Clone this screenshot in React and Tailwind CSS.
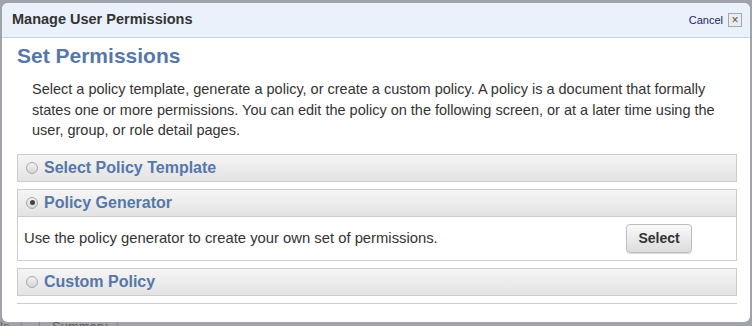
const sections = [
  { id: "template", title: "Select Policy Template", selected: false },
  {
    id: "generator",
    title: "Policy Generator",
    selected: true,
    body: "Use the policy generator to create your own set of permissions.",
  },
  { id: "custom", title: "Custom Policy", selected: false },
];

const Radio = ({ checked }) => (
  <span className="w-[12px] h-[12px] rounded-full border border-[#a9a9a9] bg-gradient-to-b from-[#f2f2f2] to-[#d6d6d6] flex items-center justify-center shrink-0">
    {checked && <span className="w-[5px] h-[5px] rounded-full bg-[#444]" />}
  </span>
);

const Section = ({ section }) => (
  <div className="border border-[#cccccc]">
    <div className="h-[26px] flex items-center gap-[6px] pl-[8px] bg-gradient-to-b from-[#f5f5f5] to-[#e3e3e3]">
      <Radio checked={section.selected} />
      <span className="text-[16px] font-bold text-[#5677a8]">{section.title}</span>
    </div>
    {section.body && (
      <div className="border-t border-[#cccccc] bg-white h-[44px] flex items-center justify-between pl-[6px] pr-[44px]">
        <span className="text-[14.8px] text-[#333]">{section.body}</span>
        <button className="w-[66px] h-[29px] rounded-[4px] border border-[#bdbdbd] bg-gradient-to-b from-[#fafafa] to-[#dcdcdc] text-[14px] font-bold text-[#333] shadow-[0_1px_1px_rgba(0,0,0,0.15)]">
          Select
        </button>
      </div>
    )}
  </div>
);

export default function App() {
  return (
    <div
      className="relative w-[752px] h-[326px] overflow-hidden bg-[#a0a4a8]"
      style={{ fontFamily: '"Liberation Sans", Arial, sans-serif' }}
    >
      {/* page behind the overlay */}
      <div className="absolute left-0 top-[320px] w-full h-[6px] flex text-[13px] text-[#5c5f62] leading-[14px]">
        <div className="w-[22px] border-r border-[#84888c] pl-0">ls</div>
        <div className="w-[18px] border-r border-[#84888c]" />
        <div className="w-[78px] border-r border-[#84888c] pl-[12px]">Summary</div>
      </div>

      <div className="absolute left-[2px] top-[3px] w-[748px] h-[319px] rounded-[6px] bg-white overflow-hidden flex flex-col">
        <div className="h-[35px] shrink-0 bg-[#eaf1fb] border-b border-[#c6d4e6] flex items-center justify-between pl-[10px] pr-[8px]">
          <span className="text-[14.5px] font-bold text-[#333]">Manage User Permissions</span>
          <div className="flex items-center gap-[5px]">
            <span className="text-[11px] text-[#1d1d6b]">Cancel</span>
            <span className="w-[14px] h-[14px] border border-[#a8a8a8] bg-[#ececec] flex items-center justify-center text-[12px] leading-none text-[#555]">
              ×
            </span>
          </div>
        </div>

        <div className="pl-[15px] pr-[13px]">
          <h1 className="mt-[6px] text-[21px] font-bold text-[#5677a8] leading-[23px]">Set Permissions</h1>
          <p className="mt-[12px] pl-[15px] pr-[8px] text-[14.5px] text-[#333] leading-[20.5px]">
            Select a policy template, generate a policy, or create a custom policy. A policy is a document that formally
            <br />
            states one or more permissions. You can edit the policy on the following screen, or at a later time using the
            <br />
            user, group, or role detail pages.
          </p>
          <div className="mt-[13px] flex flex-col gap-[7px]">
            {sections.map((s) => (
              <Section key={s.id} section={s} />
            ))}
          </div>
          <div className="mt-[7px] border-t border-[#cccccc]" />
        </div>
      </div>
    </div>
  );
}
